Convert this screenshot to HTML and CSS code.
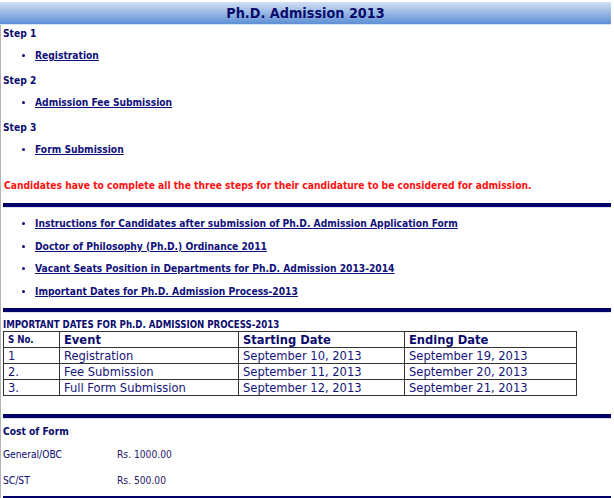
FILE: index.html
```html
<!DOCTYPE html>
<html>
<head>
<meta charset="utf-8">
<link rel="stylesheet" href="styles.css">
</head>
<body>
<div class="page">
  <div class="header">Ph.D. Admission 2013</div>
  <div class="content">
    <div class="step">Step 1</div>
    <ul class="links"><li><a href="#">Registration</a></li></ul>
    <div class="step">Step 2</div>
    <ul class="links"><li><a href="#">Admission Fee Submission</a></li></ul>
    <div class="step">Step 3</div>
    <ul class="links"><li><a href="#">Form Submission</a></li></ul>
    <p class="notice">Candidates have to complete all the three steps for their candidature to be considered for admission.</p>
    <div class="bar"></div>
    <ul class="links list">
      <li><a href="#">Instructions for Candidates after submission of Ph.D. Admission Application Form</a></li>
      <li><a href="#">Doctor of Philosophy (Ph.D.) Ordinance 2011</a></li>
      <li><a href="#">Vacant Seats Position in Departments for Ph.D. Admission 2013-2014</a></li>
      <li><a href="#">Important Dates for Ph.D. Admission Process-2013</a></li>
    </ul>
    <div class="bar"></div>
    <div class="tabletitle">IMPORTANT DATES FOR Ph.D. ADMISSION PROCESS-2013</div>
    <table class="dates">
      <tr><th class="sno">S No.</th><th class="ev">Event</th><th class="sd">Starting Date</th><th class="ed">Ending Date</th></tr>
      <tr><td>1</td><td>Registration</td><td>September 10, 2013</td><td>September 19, 2013</td></tr>
      <tr><td>2.</td><td>Fee Submission</td><td>September 11, 2013</td><td>September 20, 2013</td></tr>
      <tr><td>3.</td><td>Full Form Submission</td><td>September 12, 2013</td><td>September 21, 2013</td></tr>
    </table>
    <div class="bar bar-cost"></div>
    <div class="costtitle">Cost of Form</div>
    <div class="cost"><span class="cat">General/OBC</span><span class="amt">Rs. 1000.00</span></div>
    <div class="cost"><span class="cat">SC/ST</span><span class="amt">Rs. 500.00</span></div>
    <div class="bar bar-end"></div>
  </div>
</div>
</body>
</html>
```
FILE: styles.css
```css
html, body { margin: 0; padding: 0; background: #fff; }
body { font-family: "DejaVu Sans Condensed", "DejaVu Sans", sans-serif; color: #0a0a6e; }
.page { width: 611px; padding-top: 2px; }
.header {
  height: 22px;
  line-height: 22px;
  background: linear-gradient(#d2e0f3, #5d8fd5);
  border-bottom: 1px solid #d6e4f7;
  text-align: center;
  font-weight: bold;
  font-size: 14.3px;
  color: #0b0b6b;
}
.content { border-left: 1px solid #b4b4b4; padding: 2px 0 0 2px; }
.step { font-weight: bold; font-size: 10.2px; line-height: 13px; margin: 0; }
.links { margin: 9px 0 12px 0; padding: 0 0 0 32px; font-size: 10.2px; line-height: 13px; }
.links li { list-style: disc; }
.links a { color: #10107a; font-weight: bold; text-decoration: underline; }
.list { margin: 9px 0 7px 0; }
.list li { margin-bottom: 9.7px; }
.notice { color: #ff1010; font-weight: bold; font-size: 10.2px; margin: 23px 0 11px 1px; line-height: 13px; }
.bar { height: 4px; background: #000068; border-bottom: 1px solid #dde3f0; }
.tabletitle { font-weight: bold; font-size: 9.6px; margin-top: 5px; line-height: 13px; }
.dates { border-collapse: collapse; width: 574px; border: 1px solid #888; }
.dates th, .dates td { border: 1px solid #333; padding: 0 4px; text-align: left; font-size: 12.8px; line-height: 15px; height: 15px; color: #14147a; }
.dates th { font-weight: bold; color: #0a0a6e; }
.dates th.sno { font-size: 9.6px; }
.sno { width: 47px; }
.ev { width: 170px; }
.sd { width: 157px; }
.bar-cost { margin-top: 18px; }
.costtitle { font-weight: bold; font-size: 10.2px; margin-top: 6px; line-height: 13px; }
.cost { font-size: 10.2px; line-height: 13px; margin-top: 10px; display: flex; }
.cost + .cost { margin-top: 13px; }
.cat { width: 114px; }
.amt { color: #2a1a6a; }
.bar-end { margin-top: 9px; }
```
